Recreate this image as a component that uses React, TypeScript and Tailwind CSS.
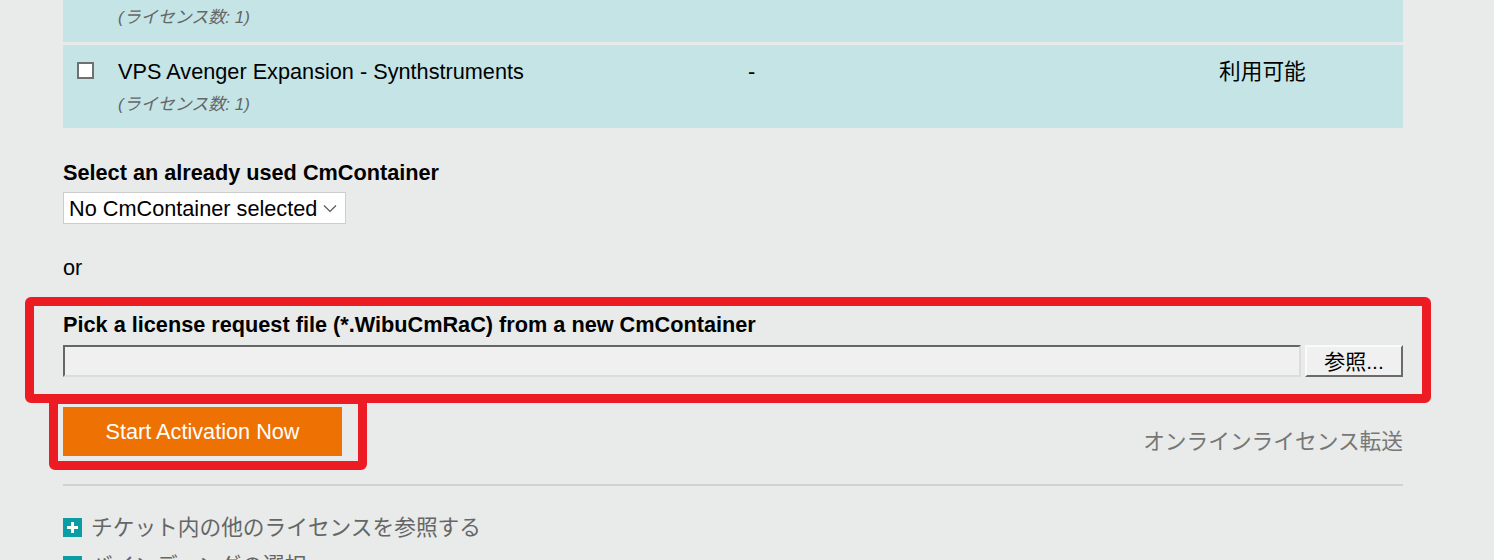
const font = "font-['Liberation_Sans',Arial,'Noto_Sans_CJK_JP',sans-serif]"

function PlusIcon() {
  return (
    <svg width="19" height="19" viewBox="0 0 19 19" className="shrink-0">
      <rect width="19" height="19" fill="#0a9ea4" />
      <path d="M9.5 4v11M4 9.5h11" stroke="#fff" strokeWidth="3" />
    </svg>
  )
}

function Chevron() {
  return (
    <svg width="14" height="9" viewBox="0 0 14 9" className="shrink-0">
      <path d="M1 1.5l6 6 6-6" fill="none" stroke="#555" strokeWidth="1.2" />
    </svg>
  )
}

export default function App() {
  return (
    <div className={`relative min-h-screen overflow-hidden bg-[#e8ebea] text-[21.7px] leading-[25px] text-black ${font}`}>
      <div className="ml-[63px] w-[1340px]">
        {/* license rows */}
        <div className="h-[42px] bg-[#c4e4e6] pl-[55px] pt-[3px]">
          <span className="text-[17px] italic leading-[20px] text-[#666]">(ライセンス数: 1)</span>
        </div>
        <div className="mt-[3px] flex h-[83px] bg-[#c4e4e6] pt-[14px]">
          <div className="w-[55px] pl-[14px] pt-[3px]">
            <div className="h-[17px] w-[17px] border-2 border-[#707070] bg-white" />
          </div>
          <div className="w-[630px]">
            <div className="leading-[26px]">VPS Avenger Expansion - Synthstruments</div>
            <div className="mt-[9px] text-[17px] italic leading-[22px] text-[#666]">(ライセンス数: 1)</div>
          </div>
          <div className="w-[471px] leading-[26px]">-</div>
          <div className="leading-[26px]">利用可能</div>
        </div>

        {/* existing container */}
        <div className="mt-[32px] font-bold">Select an already used CmContainer</div>
        <div className="mt-[7px] flex h-[32px] w-[283px] items-center justify-between border border-[#cdcdcd] bg-white pl-[5px] pr-[8px]">
          <span>No CmContainer selected</span>
          <Chevron />
        </div>

        <div className="mt-[31px]">or</div>

        {/* new container */}
        <div className="mt-[32px] font-bold">Pick a license request file (*.WibuCmRaC) from a new CmContainer</div>
        <div className="mt-[8px] flex h-[32px] gap-[4px]">
          <div className="flex-1 border-2 border-t-[#666] border-l-[#666] border-b-[#dcdcdc] border-r-[#dcdcdc] bg-[#f0f0f0]" />
          <div className="flex w-[98px] items-center justify-center border-2 border-t-[#fafafa] border-l-[#fafafa] border-b-[#6a6a6a] border-r-[#6a6a6a] bg-[#f0f0f0] text-[21px]">
            参照...
          </div>
        </div>

        <div className="mt-[30px] flex items-start justify-between">
          <div className="flex h-[49px] w-[279px] items-center justify-center bg-[#ee7203] text-white">
            Start Activation Now
          </div>
          <div className="mt-[22px] text-[#777]">オンラインライセンス転送</div>
        </div>

        <div className="mt-[28px] h-[2px] bg-[#cfd2d1]" />

        <div className="mt-[29px] flex items-center gap-[9px] text-[#666]">
          <PlusIcon />
          <span>チケット内の他のライセンスを参照する</span>
        </div>
        <div className="mt-[13px] flex items-center gap-[9px] text-[#666]">
          <PlusIcon />
          <span>バインディングの選択</span>
        </div>
      </div>

      {/* red annotation marks */}
      <div className="absolute left-[25px] top-[297px] h-[106px] w-[1406px] rounded-[6px] border-[9px] border-[#ed1c24]" />
      <div className="absolute left-[49px] top-[395px] h-[75px] w-[318px] rounded-[6px] border-[9px] border-[#ed1c24]" />
    </div>
  )
}
